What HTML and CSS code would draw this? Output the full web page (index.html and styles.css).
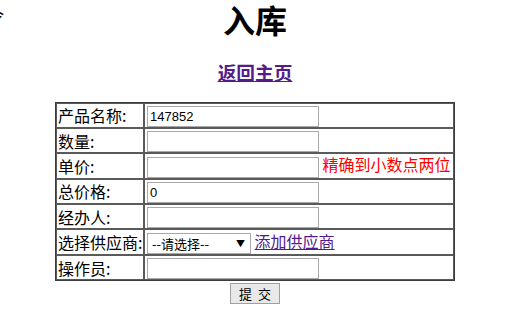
FILE: index.html
```html
<!DOCTYPE html>
<html lang="zh-CN">
<head>
  <meta charset="UTF-8" />
  <title>入库</title>
  <link rel="stylesheet" href="styles.css">
</head>
<body>
  <span class="edge">令</span>
  <h1>入库</h1>
  <h3 class="back"><a href="#">返回主页</a></h3>

  <form class="stock-form">
    <table class="grid">
      <tr>
        <td class="label">产品名称:</td>
        <td><input type="text" value="147852" /></td>
      </tr>
      <tr>
        <td class="label">数量:</td>
        <td><input type="text" /></td>
      </tr>
      <tr>
        <td class="label">单价:</td>
        <td><input type="text" /> <span class="hint">精确到小数点两位</span></td>
      </tr>
      <tr>
        <td class="label">总价格:</td>
        <td><input type="text" value="0" /></td>
      </tr>
      <tr>
        <td class="label">经办人:</td>
        <td><input type="text" /></td>
      </tr>
      <tr>
        <td class="label">选择供应商:</td>
        <td>
          <span class="select">--请选择--<span class="arrow">▼</span></span>
          <a href="#">添加供应商</a>
        </td>
      </tr>
      <tr>
        <td class="label">操作员:</td>
        <td><input type="text" /></td>
      </tr>
    </table>
    <div class="actions"><button type="button">提 交</button></div>
  </form>
</body>
</html>
```

FILE: styles.css
```css
body {
  margin: 0 8px 0 12px;
  font-family: "Noto Sans CJK SC", "Liberation Sans", sans-serif;
  font-size: 16px;
  color: #000;
  background: #fff;
}

a {
  color: #551a8b;
}

.edge {
  position: absolute;
  left: -12px;
  top: 5px;
  font-size: 16px;
  line-height: 20px;
}

h1 {
  margin: -1.5px 0 0;
  font-size: 32px;
  line-height: 40px;
  text-align: center;
}

.back {
  margin: 21px 0 0;
  font-size: 18.7px;
  line-height: 24px;
  text-align: center;
}

.stock-form {
  margin-top: 18px;
}

.grid {
  width: 400px;
  margin: 0 auto;
  border: 1px solid #3c3c3c;
  border-spacing: 0;
}

.grid td {
  box-sizing: border-box;
  height: 25.4px;
  border: 1px solid #5a5a5a;
  padding: 0 0 0 1px;
  line-height: 20px;
  white-space: nowrap;
}

.grid td.label {
  width: 88px;
}

.grid input {
  width: 172px;
  height: 21px;
  box-sizing: border-box;
  margin: 0 0 0 1px;
  padding: 0 2px;
  border: 1px solid #a9a9a9;
  font-family: "Liberation Sans", sans-serif;
  font-size: 13px;
  vertical-align: middle;
}

.select {
  display: inline-block;
  box-sizing: border-box;
  width: 104px;
  height: 21px;
  margin-left: 1px;
  padding: 0 4px;
  border: 1px solid #a9a9a9;
  font-size: 13px;
  line-height: 19px;
  vertical-align: middle;
  position: relative;
}

.select .arrow {
  position: absolute;
  right: 5px;
  top: 0;
  font-size: 9px;
}

.hint {
  color: #ff0000;
}

.actions {
  text-align: center;
  margin-top: 2px;
  line-height: 21px;
}

.actions button {
  width: 50px;
  height: 21px;
  padding: 0;
  border: 1px solid #a0a0a0;
  background: #e9e9e9;
  font-family: "Noto Sans CJK SC", sans-serif;
  font-size: 13px;
  line-height: 17px;
  word-spacing: 3px;
  vertical-align: top;
}
```
